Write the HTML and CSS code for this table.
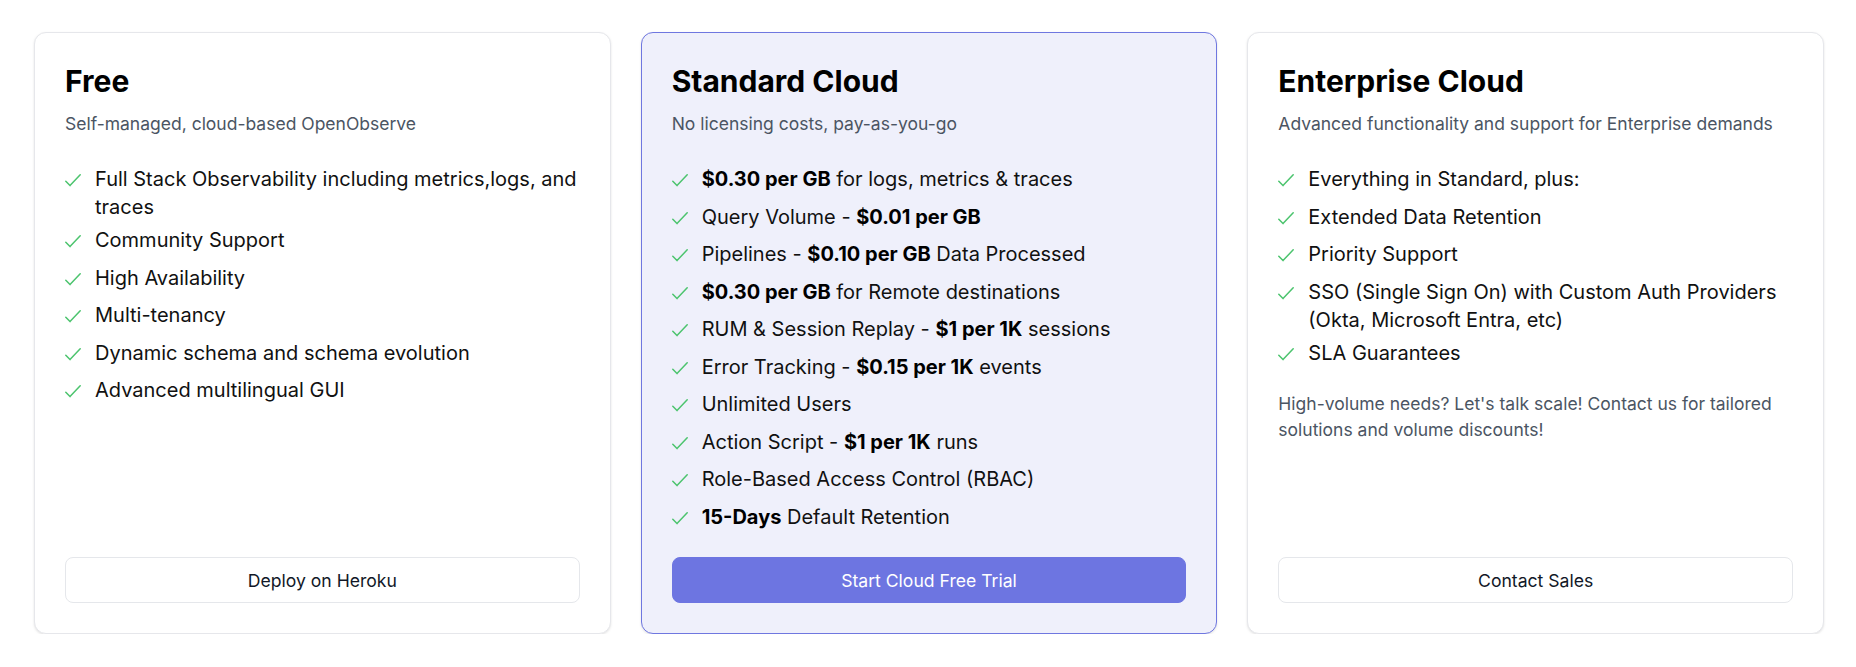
FILE: index.html
```html
<!DOCTYPE html>
<html lang="en">
<head>
<meta charset="utf-8">
<title>Pricing</title>
<link rel="stylesheet" href="styles.css">
</head>
<body>
<div class="plans">
  <section class="card">
    <h2 class="title">Free</h2>
    <p class="sub">Self-managed, cloud-based OpenObserve</p>
    <ul class="feats">
      <li><svg class="ck" viewBox="0 0 16 13"><path d="M0.8 7.2L5 11.6L15.2 0.8"/></svg><span>Full Stack Observability including metrics,logs, and traces</span></li>
      <li><svg class="ck" viewBox="0 0 16 13"><path d="M0.8 7.2L5 11.6L15.2 0.8"/></svg><span>Community Support</span></li>
      <li><svg class="ck" viewBox="0 0 16 13"><path d="M0.8 7.2L5 11.6L15.2 0.8"/></svg><span>High Availability</span></li>
      <li><svg class="ck" viewBox="0 0 16 13"><path d="M0.8 7.2L5 11.6L15.2 0.8"/></svg><span>Multi-tenancy</span></li>
      <li><svg class="ck" viewBox="0 0 16 13"><path d="M0.8 7.2L5 11.6L15.2 0.8"/></svg><span>Dynamic schema and schema evolution</span></li>
      <li><svg class="ck" viewBox="0 0 16 13"><path d="M0.8 7.2L5 11.6L15.2 0.8"/></svg><span>Advanced multilingual GUI</span></li>
    </ul>
    <a class="btn btn-outline">Deploy on Heroku</a>
  </section>
  <section class="card card-featured">
    <h2 class="title">Standard Cloud</h2>
    <p class="sub">No licensing costs, pay-as-you-go</p>
    <ul class="feats">
      <li><svg class="ck" viewBox="0 0 16 13"><path d="M0.8 7.2L5 11.6L15.2 0.8"/></svg><span><b>$0.30 per GB</b> for logs, metrics &amp; traces</span></li>
      <li><svg class="ck" viewBox="0 0 16 13"><path d="M0.8 7.2L5 11.6L15.2 0.8"/></svg><span>Query Volume - <b>$0.01 per GB</b></span></li>
      <li><svg class="ck" viewBox="0 0 16 13"><path d="M0.8 7.2L5 11.6L15.2 0.8"/></svg><span>Pipelines - <b>$0.10 per GB</b> Data Processed</span></li>
      <li><svg class="ck" viewBox="0 0 16 13"><path d="M0.8 7.2L5 11.6L15.2 0.8"/></svg><span><b>$0.30 per GB</b> for Remote destinations</span></li>
      <li><svg class="ck" viewBox="0 0 16 13"><path d="M0.8 7.2L5 11.6L15.2 0.8"/></svg><span>RUM &amp; Session Replay - <b>$1 per 1K</b> sessions</span></li>
      <li><svg class="ck" viewBox="0 0 16 13"><path d="M0.8 7.2L5 11.6L15.2 0.8"/></svg><span>Error Tracking - <b>$0.15 per 1K</b> events</span></li>
      <li><svg class="ck" viewBox="0 0 16 13"><path d="M0.8 7.2L5 11.6L15.2 0.8"/></svg><span>Unlimited Users</span></li>
      <li><svg class="ck" viewBox="0 0 16 13"><path d="M0.8 7.2L5 11.6L15.2 0.8"/></svg><span>Action Script - <b>$1 per 1K</b> runs</span></li>
      <li><svg class="ck" viewBox="0 0 16 13"><path d="M0.8 7.2L5 11.6L15.2 0.8"/></svg><span>Role-Based Access Control (RBAC)</span></li>
      <li><svg class="ck" viewBox="0 0 16 13"><path d="M0.8 7.2L5 11.6L15.2 0.8"/></svg><span><b>15-Days</b> Default Retention</span></li>
    </ul>
    <a class="btn btn-primary">Start Cloud Free Trial</a>
  </section>
  <section class="card">
    <h2 class="title">Enterprise Cloud</h2>
    <p class="sub">Advanced functionality and support for Enterprise demands</p>
    <ul class="feats">
      <li><svg class="ck" viewBox="0 0 16 13"><path d="M0.8 7.2L5 11.6L15.2 0.8"/></svg><span>Everything in Standard, plus:</span></li>
      <li><svg class="ck" viewBox="0 0 16 13"><path d="M0.8 7.2L5 11.6L15.2 0.8"/></svg><span>Extended Data Retention</span></li>
      <li><svg class="ck" viewBox="0 0 16 13"><path d="M0.8 7.2L5 11.6L15.2 0.8"/></svg><span>Priority Support</span></li>
      <li><svg class="ck" viewBox="0 0 16 13"><path d="M0.8 7.2L5 11.6L15.2 0.8"/></svg><span>SSO (Single Sign On) with Custom Auth Providers (Okta, Microsoft Entra, etc)</span></li>
      <li><svg class="ck" viewBox="0 0 16 13"><path d="M0.8 7.2L5 11.6L15.2 0.8"/></svg><span>SLA Guarantees</span></li>
    </ul>
    <p class="note">High-volume needs? Let's talk scale! Contact us for tailored solutions and volume discounts!</p>
    <a class="btn btn-outline">Contact Sales</a>
  </section>
</div>
</body>
</html>
```

FILE: styles.css
```css
* { box-sizing: border-box; }
html, body { margin: 0; padding: 0; background: #ffffff; }
body {
  font-family: Inter, "Noto Sans", "Liberation Sans", sans-serif;
  color: #111111;
}
.plans {
  display: grid;
  grid-template-columns: repeat(3, 1fr);
  gap: 30px;
  padding: 32px 32px 0 34px;
}
.card {
  display: flex;
  flex-direction: column;
  background: #ffffff;
  border: 1px solid #e6e7eb;
  border-radius: 12px;
  padding: 30px;
  box-shadow: 0 1px 3px rgba(0,0,0,0.08), 0 1px 2px rgba(0,0,0,0.04);
}
.card-featured {
  background: #eff0fb;
  border-color: #6f77e0;
}
.title {
  margin: 0;
  font-size: 30px;
  line-height: 36px;
  font-weight: 700;
  color: #000000;
}
.sub {
  margin: 13px 0 0;
  font-size: 17.5px;
  line-height: 24px;
  color: #4b5563;
}
.feats {
  list-style: none;
  margin: 29px 0 20px;
  padding: 0;
  display: flex;
  flex-direction: column;
  gap: 5px;
}
.card-featured .feats { margin-bottom: 22px; }
.feats li {
  display: flex;
  align-items: flex-start;
  gap: 14px;
  min-height: 32.5px;
  font-size: 20px;
  line-height: 28px;
  color: #111111;
}
.feats b { font-weight: 700; color: #000; }
.ck {
  flex: none;
  width: 16px;
  height: 13px;
  margin-top: 9px;
  fill: none;
  stroke: #4cc46e;
  stroke-width: 1.5;
  stroke-linecap: round;
  stroke-linejoin: round;
}
.note {
  margin: 0;
  font-size: 17.5px;
  line-height: 25.6px;
  color: #4b5563;
}
.btn {
  margin-top: auto;
  display: flex;
  align-items: center;
  justify-content: center;
  height: 46px;
  border-radius: 8px;
  font-size: 17.6px;
  font-weight: 400;
  text-decoration: none;
  cursor: pointer;
}
.btn-outline {
  background: #ffffff;
  border: 1px solid #e5e7eb;
  color: #111827;
}
.btn-primary {
  background: #6d75e1;
  color: #ffffff;
  border: 1px solid #6d75e1;
}
```
